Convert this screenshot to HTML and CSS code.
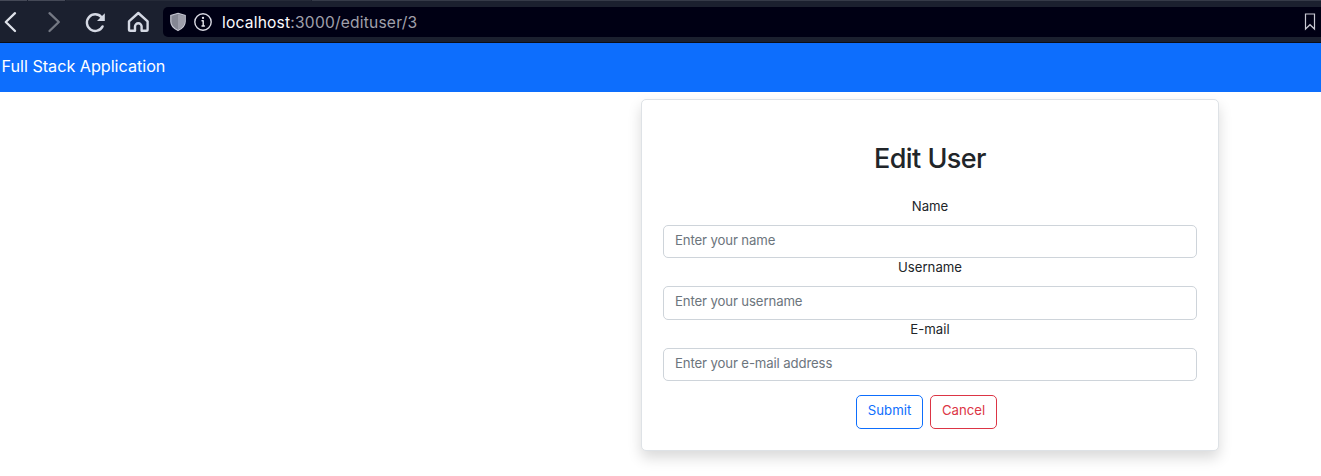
FILE: index.html
```html
<!DOCTYPE html>
<html lang="en">
<head>
<meta charset="utf-8">
<title>Full Stack Application</title>
<link rel="stylesheet" href="styles.css">
</head>
<body>
<header class="toolbar">
  <div class="tab-edge"><i class="tab-one"></i><i class="tab-two"></i><i class="tab-active"></i><i class="tab-rest"></i></div>
  <div class="toolbar-row">
    <nav class="controls">
      <svg class="icon" width="24" height="24" viewBox="0 0 24 24"><path d="M15 3.200 5.800 12l9.200 9" stroke="#dfe2ea" stroke-width="2.300"/></svg>
      <svg class="icon" width="24" height="24" viewBox="0 0 24 24"><path d="m7.500 3.200 9.300 8.800-9.300 9" stroke="#757984" stroke-width="2.300"/></svg>
      <svg class="icon" width="24" height="24" viewBox="0 0 24 24"><path d="M18.600 16.400A8.300 8.300 0 1 1 17.500 7.200" stroke="#d5d9e4" stroke-width="2.400"/><path d="M20.800 3.200v7.800H13z" fill="#d5d9e4" stroke="none"/></svg>
      <svg class="icon" width="24" height="24" viewBox="0 0 24 24"><path d="M3 11.300 12.300 3l9.300 8.300v8.200a1.300 1.300 0 0 1-1.300 1.300h-4.700v-4.200a3.300 3.300 0 0 0-6.600 0v4.200H4.300A1.300 1.300 0 0 1 3 19.500z" stroke="#d5d9e4" stroke-width="2.400"/></svg>
    </nav>
    <div class="address">
      <svg width="18" height="20" viewBox="0 0 18 20"><path d="M9 1.300 16.200 3.500v6c0 4.300-3 7-7.200 9-4.200-2-7.200-4.700-7.200-9v-6z" fill="#858793" stroke="#c6c7d2" stroke-width="1.200"/><path d="M9 2.500 15.400 4.300v5.200c0 3.500-2.400 6-6.400 8z" fill="#9d9eaa"/></svg>
      <svg class="icon info" width="20" height="20" viewBox="0 0 20 20"><circle cx="10" cy="10" r="8.200" stroke="#d9d9e3" stroke-width="1.400"/><path d="M9 8.800h1.200V14M9 14h2.400" stroke="#e7e7ee" stroke-width="1.400"/><circle cx="10" cy="5.900" r="1.150" fill="#e7e7ee"/></svg>
      <span class="url"><b>localhost</b>:3000/edituser/3</span>
      <svg class="icon bookmark" width="12" height="18" viewBox="0 0 12 18"><path d="M1.500 1h9v15L6 11.700 1.500 16z" stroke="#c9c9d3" stroke-width="1.200"/></svg>
    </div>
  </div>
</header>
<div class="navbar"><a class="brand">Full Stack Application</a></div>
<main class="page">
  <section class="card">
    <h2 class="title">Edit User</h2>
    <form>
      <div class="field"><label for="name">Name</label><input id="name" type="text" placeholder="Enter your name"></div>
      <div class="field"><label for="username">Username</label><input id="username" type="text" placeholder="Enter your username"></div>
      <div class="field"><label for="email">E-mail</label><input id="email" type="text" placeholder="Enter your e-mail address"></div>
      <div class="actions"><button class="btn submit" type="submit">Submit</button><a class="btn cancel">Cancel</a></div>
    </form>
  </section>
</main>
</body>
</html>
```
FILE: styles.css
```css
* { box-sizing: border-box; }
body {
  margin: 0;
  height: 476px;
  overflow: hidden;
  background: #fff;
  color: #212529;
  font: 13.2px/20px Inter, "Liberation Sans", sans-serif;
}
.toolbar { height: 43px; background: #1b202f; border-bottom: 1px solid #0a0d17; }
.tab-edge { display: flex; height: 1px; gap: 1px; }
.tab-edge i { background: #454957; }
.tab-one { width: 27px; }
.tab-two { width: 37px; }
.tab-edge .tab-active { width: 245px; background: #252a38; }
.tab-edge .tab-rest { flex: 1; background: #353a48; }
.toolbar-row { display: flex; height: 41px; padding-top: 6px; }
.controls { display: flex; align-items: center; width: 163px; height: 30px; gap: 18px; }
.controls .icon { flex: none; }
.icon { fill: none; stroke-linecap: round; stroke-linejoin: round; }
.address {
  display: flex;
  align-items: center;
  flex: 1;
  height: 30px;
  padding: 0 5px 0 6px;
  border-radius: 5px 0 0 5px;
  background: #000014;
}
.info { margin-left: 6px; }
.url { margin-left: 9px; padding-top: 2px; color: #a0a0ab; font-size: 15.6px; line-height: 28px; letter-spacing: .19px; white-space: nowrap; }
.url b { color: #fbfbfe; font-weight: 400; }
.bookmark { margin-left: auto; stroke-linejoin: miter; }
.navbar { height: 49px; padding: 12px 1.5px; background: #0d6efd; }
.brand { display: block; color: #fff; font-size: 16.2px; line-height: 22px; letter-spacing: -.02px; }
.page { padding: 7px 102px 0 641px; }
.card {
  height: 352px;
  padding: 43px 21px 21px;
  border: 1px solid #dee2e6;
  border-radius: 5px;
  background: #fff;
  box-shadow: 0 7px 14px rgba(0, 0, 0, .15);
}
.title { margin: 0 0 21.9px; font-size: 27px; line-height: 32px; font-weight: 500; letter-spacing: -.55px; text-align: center; }
.field { display: flex; flex-direction: column; gap: 10.1px; }
.field label { line-height: 18px; text-align: center; }
.field input {
  width: 100%;
  height: 33.3px;
  padding: 0 11px 3.6px;
  border: 1px solid #ced4da;
  border-radius: 5px;
  background: #fff;
  color: #212529;
  font: inherit;
  letter-spacing: -.13px;
}
.field input::placeholder { color: #6c757d; opacity: 1; }
.actions { display: flex; justify-content: center; gap: 7px; margin-top: 13.8px; padding-right: 7px; }
.btn {
  width: 67px;
  height: 34px;
  padding: 0 0 3px;
  border: 1px solid;
  border-radius: 5px;
  background: #fff;
  font: inherit;
  line-height: 29px;
  text-align: center;
}
.submit { color: #0d6efd; }
.cancel { color: #dc3545; }
```
